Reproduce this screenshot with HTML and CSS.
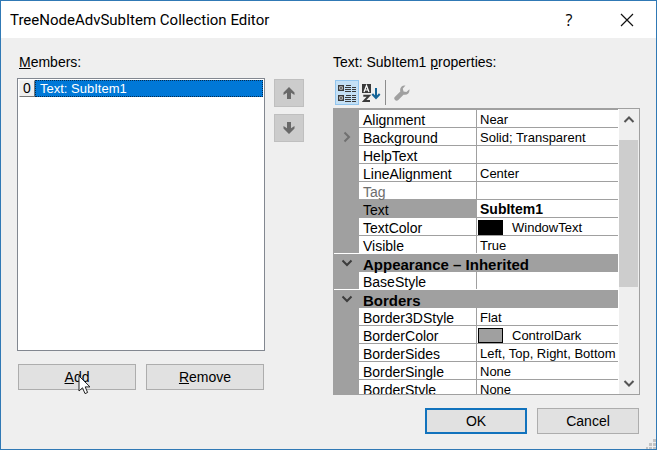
FILE: index.html
```html
<!DOCTYPE html>
<html lang="en">
<head>
<meta charset="utf-8">
<title>TreeNodeAdvSubItem Collection Editor</title>
<link rel="stylesheet" href="styles.css">
</head>
<body>
<div class="dialog">
  <header class="titlebar">
    <h1 class="title">TreeNodeAdvSubItem Collection Editor</h1>
    <button class="caption-button help" type="button" aria-label="Help">?</button>
    <button class="caption-button" type="button" aria-label="Close">
      <svg width="14" height="14" viewBox="0 0 14 14"><path d="M1 1L13 13M13 1L1 13" fill="none" stroke="#111" stroke-width="1.2"/></svg>
    </button>
  </header>

  <main class="content">
    <section class="members">
      <h2 class="label" id="members-label"><u>M</u>embers:</h2>
      <ul class="listbox" role="listbox" aria-labelledby="members-label">
        <li class="member" role="option" aria-selected="true"><span class="index">0</span><span class="member-name">Text: SubItem1</span></li>
      </ul>
      <div class="member-actions">
        <button class="button" type="button"><span><u>A</u>dd</span>
          <svg class="pointer" width="13" height="20" viewBox="0 0 13 20"><path d="M1 1V16L4.5 12.8L7 18.6L9.6 17.5L7.2 11.9H12Z" fill="#fff" stroke="#222" stroke-width="1"/></svg>
        </button>
        <button class="button" type="button"><span><u>R</u>emove</span></button>
      </div>
    </section>

    <div class="order">
      <button class="order-button" type="button" aria-label="Move up">
        <svg width="12" height="12" viewBox="0 0 12 12"><path d="M6 0L11.5 5.5V8L8 5.8V12H4V5.8L.5 8V5.5Z" fill="#696969"/></svg>
      </button>
      <button class="order-button" type="button" aria-label="Move down">
        <svg width="12" height="12" viewBox="0 0 12 12"><path d="M6 12L11.5 6.5V4L8 6.2V0H4V6.2L.5 4V6.5Z" fill="#696969"/></svg>
      </button>
    </div>

    <section class="properties">
      <h2 class="label">Text: SubItem1 <u>p</u>roperties:</h2>
      <div class="toolbar">
        <button class="tool active" type="button" aria-label="Categorized">
          <svg width="18" height="18" viewBox="0 0 18 18">
            <path d="M.7 1.7h4.6v4.6H.7zM.7 11.7h4.6v4.6H.7z" fill="#fff" stroke="#3a3a3a" stroke-width="1.4"/>
            <path d="M2 4h2M3 3v2M2 14h2M3 13v2" stroke="#3a3a3a"/>
            <path d="M8 1.5h5M7 3.5h6M7 5.5h6M7 7.5h6M8 11.5h5M7 13.5h6M7 15.5h6M7 17.5h6M14 3.5h4M14 5.5h4M14 7.5h4M14 11.5h4M14 13.5h4M14 15.5h4M14 17.5h4" stroke="#3a3a3a"/>
          </svg>
        </button>
        <button class="tool" type="button" aria-label="Alphabetical">
          <svg width="19" height="20" viewBox="0 0 19 20">
            <path d="M0 1h9v9H0z" fill="#3a3a3a"/>
            <path d="M2 9L4.5 2.5L7 9M3 7h3" fill="none" stroke="#fff" stroke-width="1.2"/>
            <path d="M1.3 12.8H7L2 18H8" fill="none" stroke="#3a3a3a" stroke-width="2"/>
            <path d="M14 5V15M10.3 11L14 15L17.7 11" fill="none" stroke="#136397" stroke-width="2"/>
          </svg>
        </button>
        <span class="divider"></span>
        <button class="tool" type="button" aria-label="Property pages" disabled>
          <svg width="16" height="16" viewBox="0 0 16 16"><path d="M11.5 .5L8.8 3.5L9.5 6.4L12.4 7L15.4 4.2C16 8 13.5 10.5 9.5 9.7L4.3 15A2.1 2.1 0 0 1 1 11.7L6.3 6.5C5.4 2.6 8 0 11.5 .5Z" fill="#a0a0a0"/></svg>
        </button>
      </div>

      <div class="grid">
        <div class="grid-view">
          <table class="grid-table">
            <colgroup><col class="gutter-column"><col class="name-column"><col></colgroup>
            <tbody>
              <tr><td></td><th scope="row">Alignment</th><td>Near</td></tr>
              <tr><td class="gutter"><svg width="8" height="12" viewBox="0 0 8 12"><path d="M1.5 1.5L6 6L1.5 10.5" fill="none" stroke="#707070" stroke-width="2"/></svg></td><th scope="row">Background</th><td>Solid; Transparent</td></tr>
              <tr><td></td><th scope="row">HelpText</th><td></td></tr>
              <tr><td></td><th scope="row">LineAlignment</th><td>Center</td></tr>
              <tr class="readonly"><td></td><th scope="row">Tag</th><td></td></tr>
              <tr class="selected"><td></td><th scope="row">Text</th><td>SubItem1</td></tr>
              <tr><td></td><th scope="row">TextColor</th><td class="color"><div class="color-value"><span class="swatch black"></span>WindowText</div></td></tr>
              <tr><td></td><th scope="row">Visible</th><td>True</td></tr>
              <tr class="category"><td class="gutter"><svg width="12" height="8" viewBox="0 0 12 8"><path d="M1.5 1.5L6 6L10.5 1.5" fill="none" stroke="#3c3c3c" stroke-width="2"/></svg></td><th colspan="2" scope="rowgroup">Appearance – Inherited</th></tr>
              <tr><td></td><th scope="row">BaseStyle</th><td></td></tr>
              <tr class="category"><td class="gutter"><svg width="12" height="8" viewBox="0 0 12 8"><path d="M1.5 1.5L6 6L10.5 1.5" fill="none" stroke="#3c3c3c" stroke-width="2"/></svg></td><th colspan="2" scope="rowgroup">Borders</th></tr>
              <tr><td></td><th scope="row">Border3DStyle</th><td>Flat</td></tr>
              <tr><td></td><th scope="row">BorderColor</th><td class="color"><div class="color-value"><span class="swatch"></span>ControlDark</div></td></tr>
              <tr><td></td><th scope="row">BorderSides</th><td>Left, Top, Right, Bottom</td></tr>
              <tr><td></td><th scope="row">BorderSingle</th><td>None</td></tr>
              <tr><td></td><th scope="row">BorderStyle</th><td>None</td></tr>
            </tbody>
          </table>
        </div>
        <div class="scrollbar">
          <svg class="scroll-arrow" width="12" height="9" viewBox="0 0 12 9"><path d="M1.5 7L6 2.5L10.5 7" fill="none" stroke="#555" stroke-width="2"/></svg>
          <div class="track"><div class="thumb"></div></div>
          <svg class="scroll-arrow" width="12" height="9" viewBox="0 0 12 9"><path d="M1.5 2L6 6.5L10.5 2" fill="none" stroke="#555" stroke-width="2"/></svg>
        </div>
      </div>
    </section>
  </main>

  <footer class="footer">
    <button class="button default" type="button">OK</button>
    <button class="button" type="button">Cancel</button>
  </footer>
  <svg class="grip" width="10" height="10" viewBox="0 0 10 10"><path d="M7 0h3v3H7zM3 4h3v3H3zM7 4h3v3H7zM0 8h2v2H0zM3 8h3v2H3zM7 8h3v2H7z" fill="#c3c3c3"/></svg>
</div>
</body>
</html>
```
FILE: styles.css
```css
* {
  box-sizing: border-box;
}

body {
  margin: 0;
  color: #000;
  font: 14px/16px "Liberation Sans", Arial, sans-serif;
}

button {
  margin: 0;
  padding: 0;
  border: 0;
  background: none;
  color: inherit;
  font: inherit;
}

svg {
  display: block;
}

.dialog {
  position: relative;
  display: flex;
  flex-direction: column;
  height: 100vh;
  border: 1px solid #3079b5;
  background: #efefef;
}

/* Title bar */
.titlebar {
  display: flex;
  align-items: center;
  flex: none;
  height: 37px;
  padding-left: 9px;
  background: #fff;
}

.title {
  flex: 1;
  margin: 0;
  font: 15px/20px Roboto, "Open Sans", sans-serif;
}

.caption-button {
  display: grid;
  place-items: center;
  width: 58px;
  height: 100%;
}

.help {
  font: 16px/20px "Open Sans", "Noto Sans", sans-serif;
}

/* Content */
.content {
  display: grid;
  grid-template-columns: 248fr 30px 327fr;
  column-gap: 9px;
  flex: 1;
  min-height: 0;
  padding: 16px 16px 0;
}

.label {
  margin: 0 0 8px;
  padding-left: 2px;
  font-size: 14px;
  font-weight: normal;
  line-height: 16px;
}

.members,
.properties {
  display: flex;
  flex-direction: column;
  min-width: 0;
  min-height: 0;
}

.listbox {
  flex: 1;
  margin: 0;
  padding: 1px;
  border: 1px solid #828790;
  background: #fff;
  list-style: none;
}

.member {
  display: flex;
  height: 17px;
  font-size: 13px;
  line-height: 15px;
}

.index {
  width: 16px;
  border: 1px solid;
  border-color: #f4f4f4 #777 #777 #f4f4f4;
  background: #efefef;
  font-size: 14px;
  text-align: center;
}

.member-name {
  flex: 1;
  padding-left: 4px;
  border: 1px dotted #042c50;
  background: #0078d7;
  color: #fff;
}

.member-actions {
  display: grid;
  grid-template-columns: 1fr 1fr;
  gap: 10px;
  padding: 13px 1px 5px;
}

.button {
  position: relative;
  height: 26px;
  border: 1px solid #adadad;
  background: #e1e1e1;
}

.default {
  border: 2px solid #1273bd;
}

.pointer {
  position: absolute;
  top: 10px;
  left: 59px;
}

.order {
  display: flex;
  flex-direction: column;
  gap: 7px;
  padding-top: 25px;
}

.order-button {
  display: grid;
  place-items: center;
  height: 28px;
  border: 1px solid #bfbfbf;
  background: #ccc;
}

.properties {
  padding-left: 20px;
}

.properties .label {
  padding-left: 0;
}

/* Property grid */
.toolbar {
  display: flex;
  align-items: center;
  height: 30px;
  padding: 2px 2px 3px;
}

.tool {
  display: grid;
  place-items: center;
  width: 24px;
  height: 25px;
}

.active {
  border: 1px solid #92c5ee;
  background: #c4e0f5;
}

.divider {
  width: 1px;
  height: 25px;
  margin: 0 4px 0 2px;
  background: #8c8c8c;
}

.grid {
  display: flex;
  flex: 1;
  min-height: 0;
  border: 1px solid #a0a0a0;
}

.grid-view {
  flex: 1;
  overflow: hidden;
  min-width: 0;
}

.grid-table {
  width: 100%;
  border-spacing: 0;
  table-layout: fixed;
}

.gutter-column {
  width: 25px;
}

.name-column {
  width: 117px;
}

.grid-table tr {
  height: 18px;
}

.grid-table td,
.grid-table th {
  height: 18px;
  padding: 2px 0 0 3px;
  border-top: 1px solid #a0a0a0;
  background: #fff;
  font-size: 13px;
  font-weight: normal;
  line-height: 15px;
  text-align: left;
  white-space: nowrap;
}

.grid-table th {
  padding: 4px 0 0 4px;
  font-size: 14px;
  line-height: 13px;
}

.grid-table td:first-child {
  padding: 0;
  background: #a0a0a0;
}

.grid-table td:last-child {
  border-left: 1px solid #a0a0a0;
}

.grid-table .readonly th {
  color: #6d6d6d;
}

.grid-table .selected th {
  background: #a0a0a0;
}

.grid-table .selected td {
  font-size: 14px;
  font-weight: bold;
}

.grid-table .category td,
.grid-table .category th {
  border-top-color: #fff;
  background: #a0a0a0;
}

.grid-table .category th {
  font-size: 15px;
  font-weight: bold;
}

.gutter svg {
  margin: 0 auto;
}

.grid-table .color {
  padding: 1px 0 0 1px;
}

.color-value {
  display: flex;
  align-items: center;
  gap: 9px;
}

.swatch {
  width: 25px;
  height: 15px;
  border: 1px solid #000;
  background: #a0a0a0;
}

.black {
  background: #000;
}

.scrollbar {
  display: flex;
  flex-direction: column;
  width: 21px;
  border-left: 1px solid #fff;
  background: #efefef;
}

.scroll-arrow {
  flex: none;
  margin: 6px auto;
}

.track {
  flex: 1;
  padding: 10px 1px 0 0;
}

.thumb {
  height: 147px;
  background: #cdcdcd;
}

/* Footer */
.footer {
  display: grid;
  grid-template-columns: 102px 102px;
  justify-content: end;
  gap: 10px;
  padding: 13px 17px 15px;
}

.grip {
  position: absolute;
  right: 0;
  bottom: 0;
}
```
